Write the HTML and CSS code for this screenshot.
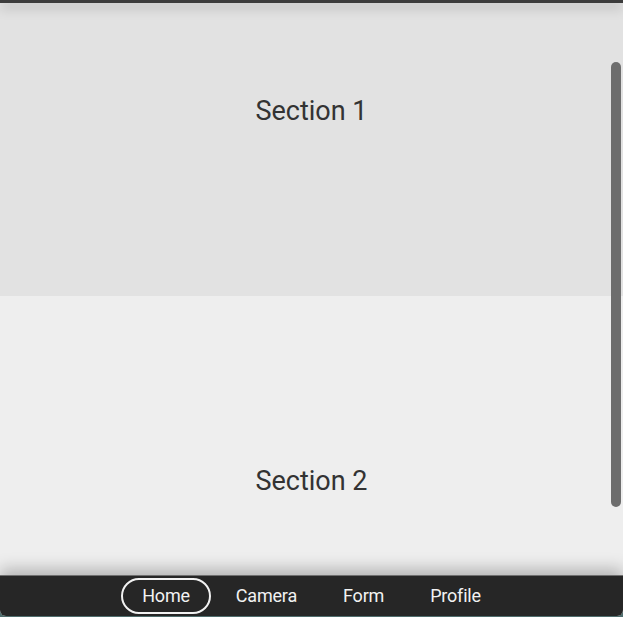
FILE: index.html
```html
<!DOCTYPE html>
<html lang="en">
  <head>
    <meta charset="UTF-8" />
    <meta name="viewport" content="width=device-width,initial-scale=1.0" />
    <title>Sections</title>
    <link rel="stylesheet" href="styles.css">
  </head>
  <body>
    <div class="app">
      <div class="top-bar"></div>
      <div class="content">
        <div class="section-list">
          <div class="section section-1">Section 1</div>
          <div class="section section-2">Section 2</div>
        </div>
        <div class="scroll-thumb"></div>
      </div>
      <div class="bottom-nav">
        <a href="#" class="nav-item active">Home</a>
        <a href="#" class="nav-item">Camera</a>
        <a href="#" class="nav-item">Form</a>
        <a href="#" class="nav-item">Profile</a>
      </div>
    </div>
  </body>
</html>
```

FILE: styles.css
```css
html,
body {
  margin: 0;
  height: 100%;
}
body {
  background-color: #4f6d6d;
  font-family: Roboto, "Liberation Sans", sans-serif;
  overflow: hidden;
}
.app {
  height: 616px;
  display: flex;
  flex-direction: column;
  position: relative;
  overflow: hidden;
  border-radius: 0 0 6px 6px;
  background-color: #eeeeee;
}
.top-bar {
  height: 3px;
  background-color: #3c3c3c;
  box-shadow: 0 4px 12px rgba(0, 0, 0, 0.35);
  position: relative;
  z-index: 2;
}
.content {
  flex: 1;
  overflow: hidden;
  position: relative;
}
.section-list {
  margin-top: -77px;
}
.section {
  height: 370px;
  display: flex;
  align-items: center;
  justify-content: center;
  font-size: 27px;
  color: #333;
}
.section-1 {
  background-color: #e2e2e2;
}
.section-2 {
  background-color: #eeeeee;
}
.scroll-thumb {
  position: absolute;
  right: 2px;
  top: 59px;
  width: 10px;
  height: 445px;
  border-radius: 5px;
  background-color: #6d6d6d;
}
.bottom-nav {
  height: 40px;
  background-color: #262626;
  border-top: 1px solid #6e6e6e;
  display: flex;
  justify-content: center;
  align-items: center;
  box-shadow: 0 -6px 16px rgba(0, 0, 0, 0.25);
  position: relative;
  z-index: 2;
}
.nav-item {
  color: #f2f2f2;
  text-decoration: none;
  font-size: 18px;
  letter-spacing: -0.2px;
  padding: 5px 19px 6px;
  margin: 0 2px;
  border: 2px solid transparent;
  border-radius: 18px;
}
.nav-item.active {
  border-color: #f2f2f2;
}
```
